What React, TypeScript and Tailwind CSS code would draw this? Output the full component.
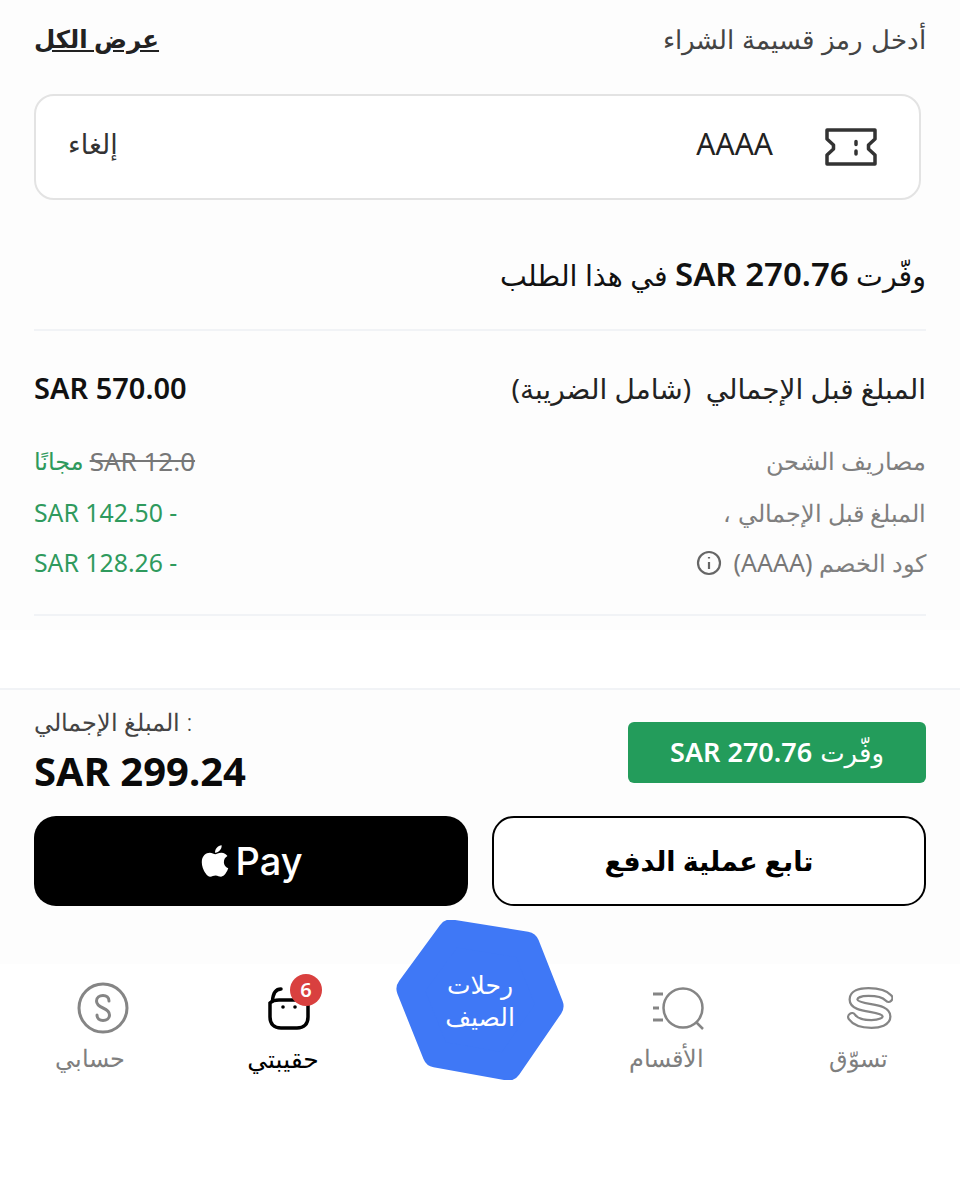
import React from 'react';
import { FaApple } from 'react-icons/fa';

const sans = "font-['Noto_Sans','Open_Sans','DejaVu_Sans',sans-serif]";

function TicketIcon() {
  return (
    <svg width="52" height="38" viewBox="0 0 52 38" fill="none" stroke="#333" strokeWidth="3.5" strokeLinejoin="round">
      <path d="M2 2H50V11L43.5 17V21L50 27V36H2V27L8.5 21V17L2 11Z" />
      <path d="M31 13.5V16.5M31 23V26" strokeLinecap="round" />
    </svg>
  );
}

function LogoS() {
  const d = 'M41 11C37 6.500 28 5 21 5C12 5 6 7.500 6 12.500C6 18 14 19.500 23 21C32 22.500 39 24 39 29.500C39 34.500 32 37 24 37C15 37 8 35 4.500 30';
  return (
    <svg width="46" height="44" viewBox="0 0 46 44" fill="none" strokeLinecap="round">
      <path d={d} stroke="#858585" strokeWidth="10" transform="translate(0.500 1)" />
      <path d={d} stroke="#ffffff" strokeWidth="5.500" transform="translate(0.500 1)" />
    </svg>
  );
}

function SearchIcon() {
  return (
    <svg width="52" height="44" viewBox="0 0 52 44" fill="none" stroke="#858585" strokeWidth="2.500">
      <circle cx="31" cy="22" r="19.500" />
      <path d="M44 36L51 43" />
      <path d="M1 8H11M1 22H7M1 34H11" strokeWidth="3" />
    </svg>
  );
}

function AccountIcon() {
  return (
    <svg width="52" height="52" viewBox="0 0 52 52" fill="none" stroke="#858585" strokeWidth="3">
      <circle cx="26" cy="26" r="24" />
      <path d="M32 19C32 15.500 29.500 13.500 26 13.500C22.500 13.500 19.500 15.500 19.500 19C19.500 22.500 22.500 24.500 26 26C29.500 27.500 32.500 29.500 32.500 33C32.500 36.500 29.500 38.500 26 38.500C22.500 38.500 20 36.500 20 33" strokeLinecap="round" />
    </svg>
  );
}

function BagIcon() {
  return (
    <svg width="44" height="44" viewBox="0 0 44 44" fill="none" stroke="#000" strokeWidth="3.500" strokeLinecap="round">
      <path d="M3 17V31C3 38 7 42 14 42H30C37 42 41 38 41 31V17C41 15.500 39 14 36 14H12C8 14 5 15 3 17Z" />
      <path d="M14 3C9 3 6 7 5.500 15" />
      <circle cx="16" cy="21" r="1.800" fill="#000" stroke="none" />
      <circle cx="28" cy="21" r="1.800" fill="#000" stroke="none" />
    </svg>
  );
}

function Hexagon() {
  return (
    <svg width="168" height="160" viewBox="0 0 168 160" className="absolute inset-0">
      <polygon
        points="55,13 130,25 154,86 112,147 40,134 14,69"
        fill="#3f78f6"
        stroke="#3f78f6"
        strokeWidth="27"
        strokeLinejoin="round"
      />
    </svg>
  );
}

export default function App() {
  return (
    <div dir="rtl" className={`w-[960px] h-[1200px] bg-white overflow-hidden ${sans}`}>
      <div className="bg-[#fdfdfd] h-[630px] px-[34px]">
        <div className="flex items-center justify-between pt-[18px] h-[60px]">
          <span className="text-[26px] [word-spacing:1.3px] leading-[40px] font-light text-[#444]">أدخل رمز قسيمة الشراء</span>
          <span className="text-[24.500px] leading-[40px] font-semibold text-[#222] underline">عرض الكل</span>
        </div>

        <div className="mt-[34px] mr-[5px] h-[106px] border-2 border-[#e3e3e3] rounded-[20px] bg-white flex items-center pr-[42px] pl-[32px]">
          <TicketIcon />
          <span className="mr-[52px] mb-[6px] text-[30px] leading-[40px] text-[#222]">AAAA</span>
          <span className="mr-auto mb-[6px] text-[27px] leading-[40px] text-[#333]">إلغاء</span>
        </div>

        <div className="mt-[54px] text-[28.500px] leading-[40px] text-[#111]">
          وفّرت <span className="text-[33px] font-semibold" dir="ltr">SAR 270.76</span> في هذا الطلب
        </div>

        <div className="mt-[34px] h-[2px] bg-[#f1f3f6]" />

        <div className="mt-[38px] flex items-center justify-between">
          <span className="text-[28px] leading-[38px] text-[#222]">المبلغ قبل الإجمالي&nbsp; (شامل الضريبة)</span>
          <span dir="ltr" className="text-[29px] leading-[38px] font-semibold text-[#111]">SAR 570.00</span>
        </div>

        <div className="mt-[36px] flex items-center justify-between h-[36px]">
          <span className="text-[24px] font-light text-[#7f7f7f]">مصاريف الشحن</span>
          <span dir="ltr" className="flex items-center gap-[6px] text-[24px]">
            <span className="text-[#2f9a5d]">مجانًا</span>
            <span className="text-[26px] text-[#777] line-through">SAR 12.0</span>
          </span>
        </div>

        <div className="mt-[16px] flex items-center justify-between h-[36px]">
          <span className="text-[24px] font-light text-[#7f7f7f]">المبلغ قبل الإجمالي ،</span>
          <span dir="ltr" className="text-[24.800px] text-[#2f9a5d]">SAR 142.50 -</span>
        </div>

        <div className="mt-[14px] flex items-center justify-between h-[36px]">
          <span className="flex items-center gap-[12px] text-[24px] font-light text-[#7f7f7f]">
            <span>
              كود الخصم <span className="font-normal text-[25px] text-[#777]">(AAAA)</span>
            </span>
            <svg width="26" height="26" viewBox="0 0 26 26" fill="none" stroke="#666" strokeWidth="2.200">
              <circle cx="13" cy="13" r="11" />
              <path d="M13 12V19M13 7V8.500" />
            </svg>
          </span>
          <span dir="ltr" className="text-[24.800px] text-[#2f9a5d]">SAR 128.26 -</span>
        </div>

        <div className="mt-[33px] h-[2px] bg-[#f1f3f6]" />
      </div>

      <div className="mt-[58px] h-[276px] border-t-2 border-[#f1f3f6] bg-[#fdfdfd] px-[34px]">
        <div className="flex items-start justify-between pt-[17px]">
          <div className="mt-[15px] w-[298px] h-[61px] rounded-[6px] bg-[#239c5b] flex items-center justify-center text-[26px] font-medium text-white">
            وفّرت <span dir="ltr" className="mr-[8px] text-[27px] font-semibold">SAR 270.76</span>
          </div>
          <div dir="ltr" className="flex flex-col items-start">
            <span className="text-[24px] leading-[30px] font-light text-[#444]">المبلغ الإجمالي :</span>
            <span className="mt-[9px] text-[40px] leading-[50px] font-bold text-[#0a0a0a]">SAR 299.24</span>
          </div>
        </div>

        <div className="mt-[20px] flex gap-[24px]">
          <button className="w-[434px] h-[90px] rounded-[22px] border-2 border-black bg-white text-[27px] font-semibold text-black">
            تابع عملية الدفع
          </button>
          <button dir="ltr" className="w-[434px] h-[90px] rounded-[22px] bg-black text-white flex items-center justify-center gap-[4px]">
            <FaApple className="w-[32px] h-[36px]" />
            <span className="text-[38px] font-medium font-['Inter',sans-serif]">Pay</span>
          </button>
        </div>
      </div>

      <div className="h-[236px] bg-white flex items-start pr-[42px] pl-[30px] pt-[20px]">
        <div className="w-[120px] flex flex-col items-center">
          <div className="ml-[24px] h-[48px] flex items-center"><LogoS /></div>
          <span className="mt-[10px] text-[24px] leading-[32px] font-light text-[#7f7f7f]">تسوّق</span>
        </div>
        <div className="mr-[72px] w-[120px] flex flex-col items-center">
          <div className="ml-[24px] h-[48px] flex items-center"><SearchIcon /></div>
          <span className="mt-[10px] text-[24px] leading-[32px] font-light text-[#7f7f7f]">الأقسام</span>
        </div>
        <div className="mr-[42px] w-[168px] h-[160px] -mt-[64px] relative flex items-center justify-center">
          <Hexagon />
          <span className="relative text-center text-[25px] leading-[32px] text-white">
            رحلات
            <br />
            الصيف
          </span>
        </div>
        <div className="mr-[53px] w-[120px] flex flex-col items-center">
          <div className="ml-[12px] h-[48px] flex items-center relative">
            <BagIcon />
            <span className="absolute top-[-10px] left-[23px] w-[32px] h-[32px] rounded-full bg-[#d9403f] text-white text-[20px] font-semibold flex items-center justify-center">
              6
            </span>
          </div>
          <span className="mt-[10px] text-[25px] leading-[32px] font-medium text-black">حقيبتي</span>
        </div>
        <div className="mr-[73px] w-[120px] flex flex-col items-center">
          <div className="ml-[26px] h-[48px] flex items-center"><AccountIcon /></div>
          <span className="mt-[10px] text-[24px] leading-[32px] font-light text-[#7f7f7f]">حسابي</span>
        </div>
      </div>
    </div>
  );
}
